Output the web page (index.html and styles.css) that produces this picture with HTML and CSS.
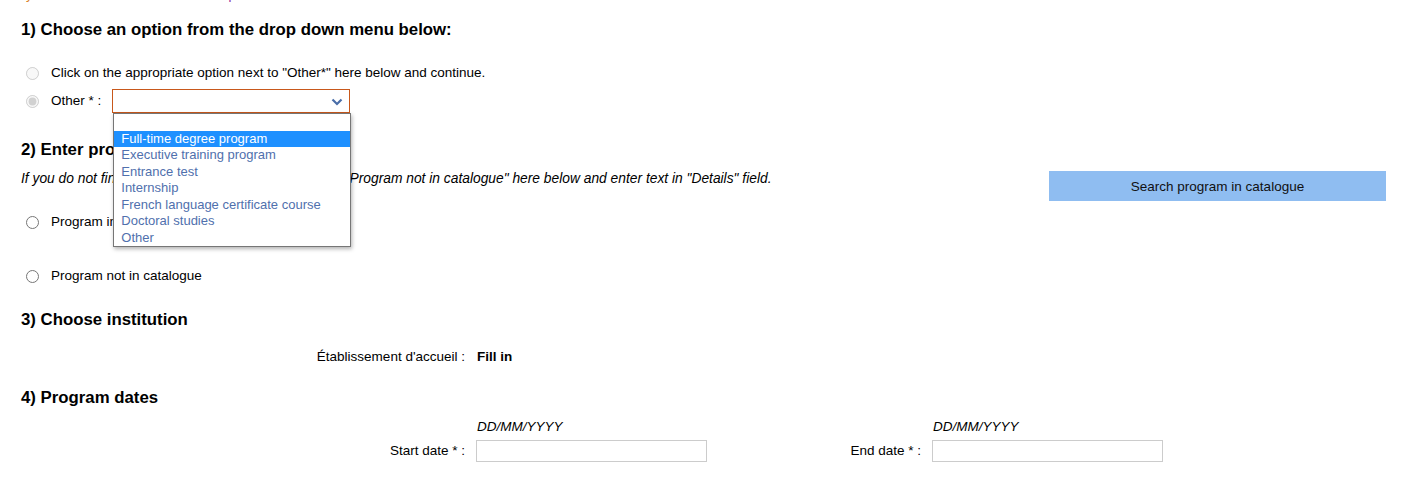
FILE: index.html
```html
<!DOCTYPE html>
<html>
<head>
<meta charset="utf-8">
<link rel="stylesheet" href="styles.css">
</head>
<body>
<div class="page">
  <div class="topline"><p class="topline-text"><span class="topline-a">y</span><span class="topline-b">p</span></p></div>

  <h2 class="h h1">1) Choose an option from the drop down menu below:</h2>
  <div class="opt-row r1">
    <input type="radio" class="radio" disabled>
    <span>Click on the appropriate option next to "Other*" here below and continue.</span>
  </div>
  <div class="opt-row r2">
    <input type="radio" class="radio" checked disabled>
    <span class="other-label">Other * :</span>
    <div class="select-wrap">
      <div class="select">
        <svg class="chev" width="12" height="8" viewBox="0 0 12 8"><polyline points="1.5,1.5 6,6 10.5,1.5" fill="none" stroke="#4a6ea8" stroke-width="2.2"/></svg>
      </div>
      <ul class="listbox">
        <li class="empty"></li>
        <li class="sel">Full-time degree program</li>
        <li>Executive training program</li>
        <li>Entrance test</li>
        <li>Internship</li>
        <li>French language certificate course</li>
        <li>Doctoral studies</li>
        <li>Other</li>
      </ul>
    </div>
  </div>

  <h2 class="h h2">2) Enter program details</h2>
  <div class="info-row">
    <p class="info">If you do not find your program in the lists, select the "Program not in catalogue" here below and enter text in "Details" field.</p>
    <button class="search-btn">Search program in catalogue</button>
  </div>
  <div class="opt-row r3">
    <input type="radio" class="radio" name="cat">
    <span>Program in catalogue</span>
  </div>
  <div class="opt-row r4">
    <input type="radio" class="radio" name="cat">
    <span>Program not in catalogue</span>
  </div>

  <h2 class="h h3">3) Choose institution</h2>
  <div class="grid inst">
    <div class="lbl">Établissement d'accueil :</div>
    <div class="val"><b>Fill in</b></div>
  </div>

  <h2 class="h h4">4) Program dates</h2>
  <div class="grid dates">
    <div></div>
    <div class="fmt">DD/MM/YYYY</div>
    <div></div>
    <div class="fmt">DD/MM/YYYY</div>
    <div class="lbl">Start date * :</div>
    <div class="val"><input type="text" class="date"></div>
    <div class="lbl">End date * :</div>
    <div class="val"><input type="text" class="date"></div>
  </div>
</div>
</body>
</html>
```

FILE: styles.css
```css
* { box-sizing: border-box; }
html, body { margin: 0; padding: 0; background: #fff; }
body {
  font-family: "Liberation Sans", Arial, sans-serif;
  font-size: 13.5px;
  color: #000;
}
.page { padding: 0 21px; }

.topline {
  height: 3px;
  overflow: hidden;
}
.topline-text {
  margin: -13px 0 0 0;
  line-height: 16px;
  font-size: 13px;
}
.topline-a { color: #d9822b; margin-left: 5px; }
.topline-b { color: #8b2a9c; margin-left: 196px; }

.h {
  font-size: 16.8px;
  font-weight: bold;
  line-height: 20px;
  margin: 0;
}
.h1 { margin-top: 17px; }
.h2 { margin-top: 27px; }
.h3 { margin-top: 24px; }
.h4 { margin-top: 21px; }

.opt-row {
  display: flex;
  align-items: center;
  line-height: 20px;
}
.r1 { margin-top: 23px; height: 20px; }
.r2 { margin-top: 6px; height: 24px; }
.r3 { margin-top: 11px; height: 20px; }
.r4 { margin-top: 34px; height: 20px; }

.radio {
  width: 13px;
  height: 13px;
  margin: 0 12px 0 5px;
  flex: none;
}
.other-label { margin-right: 11px; }

.select-wrap { position: relative; }
.select {
  width: 238px;
  height: 24px;
  border: 1px solid #c8581b;
  background: #fff;
  position: relative;
}
.chev { position: absolute; right: 6px; top: 8px; }

.listbox {
  position: absolute;
  left: 1px;
  top: 24px;
  width: 238px;
  margin: 0;
  padding: 0;
  list-style: none;
  background: #fff;
  border: 1px solid #767676;
  box-shadow: 1px 2px 4px rgba(0,0,0,0.3);
  z-index: 10;
}
.listbox li {
  height: 16.5px;
  line-height: 16.5px;
  padding-left: 7px;
  color: #5070ad;
  font-size: 13px;
  white-space: nowrap;
}
.listbox li.sel { background: #1e90ff; color: #fff; }

.info-row {
  margin-top: 11px;
  display: flex;
  justify-content: space-between;
  align-items: flex-start;
}
.info {
  margin: 0;
  font-style: italic;
  font-size: 13.8px;
  line-height: 16px;
}
.search-btn {
  margin: 0 18px 0 0;
  width: 337px;
  height: 30px;
  border: none;
  background: #8fbdf1;
  color: #111;
  font-family: "Liberation Sans", Arial, sans-serif;
  font-size: 13.5px;
  padding: 0;
}

.grid {
  display: grid;
  grid-template-columns: 456px 300px 156px auto;
  line-height: 20px;
}
.lbl { text-align: right; padding-right: 12px; }
.inst { margin-top: 17px; }
.inst .val b { font-weight: bold; }

.dates { margin-top: 9px; row-gap: 3px; }
.fmt { font-style: italic; line-height: 20px; }
.dates .lbl, .dates .val { display: flex; align-items: center; height: 22px; }
.dates .lbl { justify-content: flex-end; }
.date {
  width: 231px;
  height: 22px;
  border: 1px solid #cccccc;
  margin: 0 0 0 -1px;
  padding: 0 4px;
  font-family: "Liberation Sans", Arial, sans-serif;
  font-size: 13px;
}
```
